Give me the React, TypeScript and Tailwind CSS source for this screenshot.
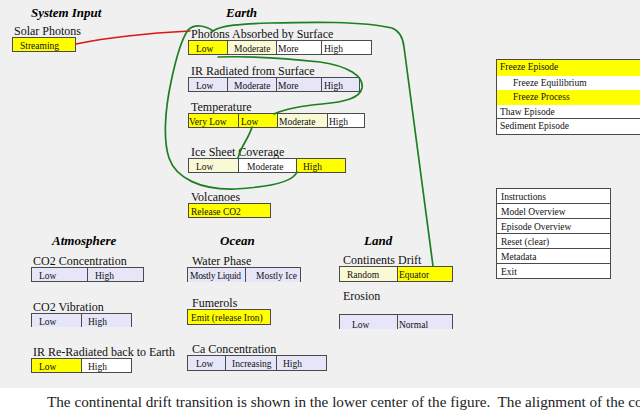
import clsx from 'clsx'

type Cell = { t: string; c: string }

const bd = 'border-[#4a4a4a]'

function Row({ cells, open, h = 'h-[15px]' }: { cells: Cell[]; open?: boolean; h?: string }) {
  return (
    <div className={clsx('flex', h)}>
      {cells.map((cell, i) => (
        <div
          key={i}
          className={clsx(
            'box-border overflow-hidden whitespace-nowrap border-t border-r pt-[2px] text-[9.5px] leading-[12px] text-[#111]',
            bd,
            !open && 'border-b',
            i === 0 && 'border-l',
            cell.c,
          )}
        >
          {cell.t}
        </div>
      ))}
    </div>
  )
}

function Label({ children, className }: { children: string; className?: string }) {
  return <div className={clsx('whitespace-nowrap text-[12px] leading-[12px] text-[#111]', className)}>{children}</div>
}

function Heading({ children, className }: { children: string; className?: string }) {
  return <div className={clsx('text-[13px] font-bold italic leading-[16px] text-black', className)}>{children}</div>
}

const episodes = [
  { t: 'Freeze Episode', c: 'h-[16px] bg-[#ffff00] pl-[3px]' },
  { t: 'Freeze Equilibrium', c: 'h-[14px] bg-white pl-[16px]' },
  { t: 'Freeze Process', c: 'h-[15px] bg-[#ffff00] pl-[16px]' },
  { t: 'Thaw Episode', c: 'h-[14px] bg-white pl-[3px] border-b border-[#4a4a4a]' },
  { t: 'Sediment Episode', c: 'h-[15px] bg-white pl-[3px]' },
]

const menu = ['Instructions', 'Model Overview', 'Episode Overview', 'Reset (clear)', 'Metadata', 'Exit']

export default function App() {
  return (
    <div className="relative h-[411px] w-[640px] overflow-hidden bg-white font-['Liberation_Serif','Times_New_Roman',serif]">
      <div className="relative flex h-[388px] bg-[#f0f0f0]">
        <div className="flex w-[496px] shrink-0 flex-col">
          <div className="flex">
            <div className="w-[188px]">
              <Heading className="ml-[31px] mt-[5px]">System Input</Heading>
              <Label className="ml-[14px] mt-[4px]">Solar Photons</Label>
              <div className="ml-[12px]">
                <Row cells={[{ t: 'Streaming', c: 'w-[64px] pl-[7px] bg-[#ffff00]' }]} />
              </div>
            </div>
            <div className="w-[184px]">
              <Heading className="ml-[38px] mt-[5px]">Earth</Heading>
              <Label className="ml-[3px] mt-[7px]">Photons Absorbed by Surface</Label>
              <Row
                cells={[
                  { t: 'Low', c: 'w-[40px] pl-[7px] bg-[#ffff00]' },
                  { t: 'Moderate', c: 'w-[49px] pl-[6px] bg-[#f9f9d6]' },
                  { t: 'More', c: 'w-[45px] pl-[1px] bg-white' },
                  { t: 'High', c: 'w-[50px] pl-[2px] bg-white' },
                ]}
              />
              <Label className="ml-[3px] mt-[10px]">IR Radiated from Surface</Label>
              <Row
                cells={[
                  { t: 'Low', c: 'w-[40px] pl-[7px] bg-[#e6e6f8]' },
                  { t: 'Moderate', c: 'w-[49px] pl-[6px] bg-[#e6e6f8]' },
                  { t: 'More', c: 'w-[45px] pl-[1px] bg-[#e6e6f8]' },
                  { t: 'High', c: 'w-[38px] pl-[2px] bg-[#e6e6f8]' },
                ]}
              />
              <Label className="ml-[3px] mt-[9px]">Temperature</Label>
              <Row
                cells={[
                  { t: 'Very Low', c: 'w-[51px] pl-0 bg-[#ffff00]' },
                  { t: 'Low', c: 'w-[39px] pl-[2px] bg-[#ffff00]' },
                  { t: 'Moderate', c: 'w-[50px] pl-[1px] bg-[#f9f9d6]' },
                  { t: 'High', c: 'w-[37px] pl-[1px] bg-white' },
                ]}
              />
              <Label className="ml-[3px] mt-[18px]">Ice Sheet Coverage</Label>
              <Row
                cells={[
                  { t: 'Low', c: 'w-[51px] pl-[7px] bg-[#f9f9d6]' },
                  { t: 'Moderate', c: 'w-[58px] pl-[8px] bg-white' },
                  { t: 'High', c: 'w-[49px] pl-[6px] bg-[#ffff00]' },
                ]}
              />
              <Label className="ml-[3px] mt-[18px]">Volcanoes</Label>
              <Row cells={[{ t: 'Release CO2', c: 'w-[83px] pl-[2px] bg-[#ffff00]' }]} />
            </div>
          </div>

          <div className="mt-[15px] flex">
            <div className="w-[187px] pl-[31px]">
              <Heading className="ml-[21px]">Atmosphere</Heading>
              <Label className="ml-[2px] mt-[6px]">CO2 Concentration</Label>
              <Row
                cells={[
                  { t: 'Low', c: 'w-[57px] pl-[7px] bg-[#e6e6f8]' },
                  { t: 'High', c: 'w-[56px] pl-[7px] bg-[#e6e6f8]' },
                ]}
              />
              <Label className="ml-[2px] mt-[19px]">CO2 Vibration</Label>
              <Row
                open
                h="h-[14px]"
                cells={[
                  { t: 'Low', c: 'w-[51px] pl-[7px] bg-[#e6e6f8]' },
                  { t: 'High', c: 'w-[50px] pl-[6px] bg-[#e6e6f8]' },
                ]}
              />
              <Label className="ml-[2px] mt-[19px]">IR Re-Radiated back to Earth</Label>
              <Row
                cells={[
                  { t: 'Low', c: 'w-[51px] pl-[7px] bg-[#ffff00]' },
                  { t: 'High', c: 'w-[50px] pl-[6px] bg-white' },
                ]}
              />
            </div>
            <div className="w-[152px]">
              <Heading className="ml-[33px]">Ocean</Heading>
              <Label className="ml-[5px] mt-[6px]">Water Phase</Label>
              <Row
                open
                cells={[
                  { t: 'Mostly Liquid', c: 'w-[59px] pl-[2px] tracking-[-0.3px] bg-[#e6e6f8]' },
                  { t: 'Mostly Ice', c: 'w-[55px] pl-[10px] bg-[#e6e6f8]' },
                ]}
              />
              <Label className="ml-[5px] mt-[15px]">Fumerols</Label>
              <Row h="h-[16px]" cells={[{ t: 'Emit (release Iron)', c: 'w-[84px] pl-[3px] bg-[#ffff00]' }]} />
              <Label className="ml-[5px] mt-[18px]">Ca Concentration</Label>
              <Row
                h="h-[16px]"
                cells={[
                  { t: 'Low', c: 'w-[39px] pl-[8px] bg-[#e6e6f8]' },
                  { t: 'Increasing', c: 'w-[51px] pl-[6px] bg-[#e6e6f8]' },
                  { t: 'High', c: 'w-[50px] pl-[6px] bg-[#e6e6f8]' },
                ]}
              />
            </div>
            <div className="flex-1">
              <Heading className="ml-[25px]">Land</Heading>
              <Label className="ml-[4px] mt-[5px]">Continents Drift</Label>
              <Row
                h="h-[16px]"
                cells={[
                  { t: 'Random', c: 'w-[59px] pl-[7px] bg-[#f9f9d6]' },
                  { t: 'Equator', c: 'w-[55px] pl-[1px] bg-[#ffff00]' },
                ]}
              />
              <Label className="ml-[4px] mt-[8px]">Erosion</Label>
              <div className="mt-[12px]">
                <Row
                  open
                  cells={[
                    { t: 'Low', c: 'w-[59px] pl-[12px] pt-[4px] bg-[#e6e6f8]' },
                    { t: 'Normal', c: 'w-[55px] pl-[1px] pt-[4px] bg-[#e6e6f8]' },
                  ]}
                />
              </div>
            </div>
          </div>
        </div>

        <div className="min-w-0 flex-1">
          <div className={clsx('mt-[59px] w-[150px] border-y border-l text-[9.5px] leading-[14px] text-[#111]', bd)}>
            {episodes.map((e) => (
              <div key={e.t} className={clsx('box-border whitespace-nowrap', e.c)}>
                {e.t}
              </div>
            ))}
          </div>
          <div className={clsx('mt-[53px] w-[115px] border-x border-t bg-white text-[9.5px] leading-[14px] text-[#111]', bd)}>
            {menu.map((m) => (
              <div key={m} className={clsx('box-border h-[15px] border-b pl-[4px] pt-[1px]', bd)}>
                {m}
              </div>
            ))}
          </div>
        </div>

        <svg className="pointer-events-none absolute inset-0" width="640" height="388" fill="none" strokeLinecap="round">
          <path d="M76 44 C 110 37, 150 33, 190 31" stroke="#e01515" strokeWidth="1.6" />
          <g stroke="#1d7f22" strokeWidth="1.7">
            <path d="M297 172 C 293 182, 270 187, 235 189 C 200 190, 176 178, 169 158 C 163 140, 165 110, 171 82 C 176 58, 181 40, 188 30 C 194 24, 205 25, 213 31" />
            <path d="M213 31 C 222 25, 240 24, 270 23 C 310 22, 362 21, 392 28 C 400 31, 403 38, 404 47 L 433 266" />
            <path d="M218 57 C 250 56, 285 58, 320 62 C 348 66, 364 76, 362 88 C 360 98, 345 102, 322 104 C 300 106, 285 109, 274 114" />
            <path d="M252 127 C 249 138, 241 146, 238 158" />
          </g>
        </svg>
      </div>
      <p className="whitespace-nowrap pl-[47px] pt-[4px] text-[15.2px] leading-[19px] text-[#222]">
        The continental drift transition is shown in the lower center of the figure.&nbsp; The alignment of the continents
      </p>
    </div>
  )
}
